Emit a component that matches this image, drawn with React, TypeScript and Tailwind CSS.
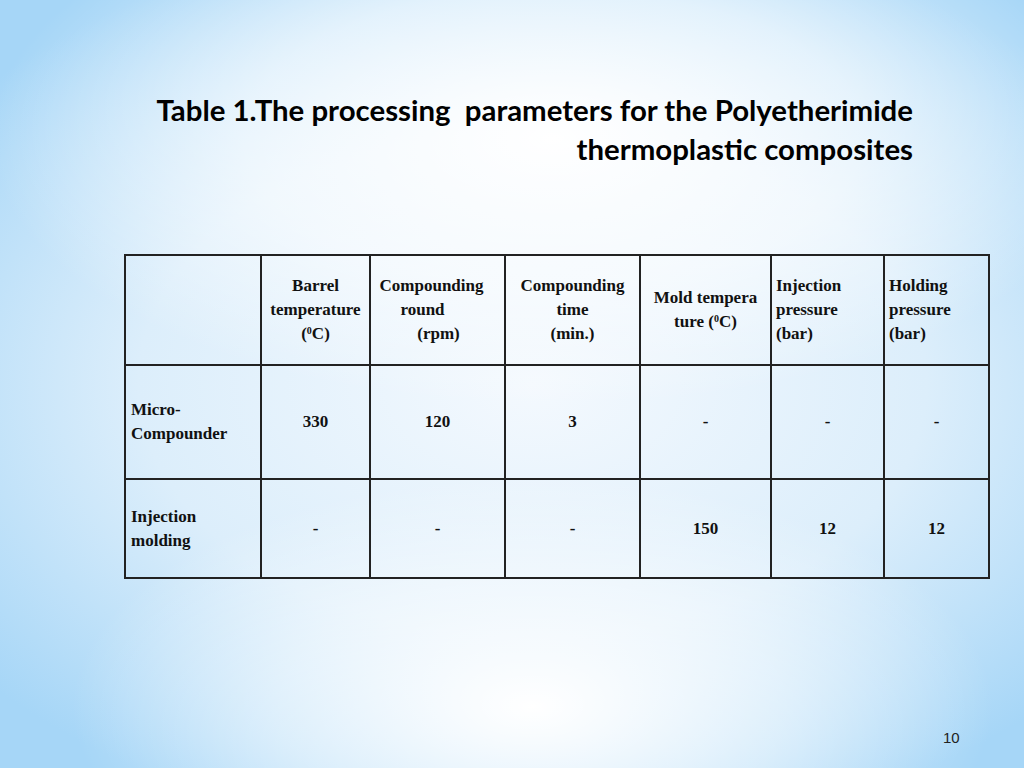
const header: { lines: React.ReactNode[]; align: "center" | "left"; pad?: string[] }[] = [
  { lines: [], align: "center" },
  {
    lines: [
      "Barrel",
      "temperature",
      <>
        (<sup className="text-[10px]">0</sup>C)
      </>,
    ],
    align: "center",
  },
  { lines: ["Compounding", "round", "(rpm)"], align: "center", pad: ["pr-[12px]", "pr-[30px]", "pl-[2px]"] },
  { lines: ["Compounding", "time", "(min.)"], align: "center" },
  {
    lines: [
      "Mold tempera",
      <>
        ture (<sup className="text-[10px]">0</sup>C)
      </>,
    ],
    align: "center",
  },
  { lines: ["Injection", "pressure", "(bar)"], align: "left" },
  { lines: ["Holding", "pressure", "(bar)"], align: "left" },
];

const rows = [
  { label: ["Micro-", "Compounder"], values: ["330", "120", "3", "-", "-", "-"], height: "h-[114px]" },
  { label: ["Injection", "molding"], values: ["-", "-", "-", "150", "12", "12"], height: "h-[99px]" },
];

const widths = ["w-[136px]", "w-[109px]", "w-[135px]", "w-[135px]", "w-[131px]", "w-[113px]", "w-[105px]"];

export default function App() {
  return (
    <div className="relative h-[768px] w-[1024px] overflow-hidden bg-[radial-gradient(ellipse_55%_35%_at_54%_18%,#ffffff_0%,rgba(255,255,255,0.6)_55%,rgba(255,255,255,0)_100%),radial-gradient(ellipse_45%_30%_at_52%_92%,#ffffff_0%,rgba(255,255,255,0.5)_55%,rgba(255,255,255,0)_100%),radial-gradient(ellipse_70%_60%_at_52%_50%,#f4f9fe_0%,#dceefb_55%,#a6d6f7_100%)]">
      <header className="pt-[90px] pr-[111px] text-right font-['Lato',sans-serif] text-[29.4px] leading-[39px] font-bold text-black">
        <div className="whitespace-pre">Table 1.The processing  parameters for the Polyetherimide</div>
        <div>thermoplastic composites</div>
      </header>

      <table className="mt-[86px] ml-[124px] w-[864px] table-fixed border-collapse font-['Liberation_Serif',serif] text-[17px] leading-[24px] font-bold text-[#111]">
        <colgroup>
          {widths.map((w, i) => (
            <col key={i} className={w} />
          ))}
        </colgroup>
        <thead>
          <tr className="h-[110px]">
            {header.map((cell, i) => (
              <th
                key={i}
                className={`border-2 border-[#222] px-[4px] align-middle font-bold ${
                  cell.align === "left" ? "text-left" : "text-center"
                }`}
              >
                {cell.lines.map((line, j) => (
                  <div key={j} className={`whitespace-nowrap ${cell.pad?.[j] ?? ""}`}>
                    {line}
                  </div>
                ))}
              </th>
            ))}
          </tr>
        </thead>
        <tbody>
          {rows.map((row) => (
            <tr key={row.label.join("")} className={row.height}>
              <td className="border-2 border-[#222] px-[5px] text-left align-middle">
                {row.label.map((l) => (
                  <div key={l}>{l}</div>
                ))}
              </td>
              {row.values.map((v, i) => (
                <td key={i} className="border-2 border-[#222] text-center align-middle">
                  {v}
                </td>
              ))}
            </tr>
          ))}
        </tbody>
      </table>

      <div className="absolute top-[728px] left-[943px] font-['Liberation_Sans',sans-serif] text-[15px] leading-[20px] text-[#222]">
        10
      </div>
    </div>
  );
}
